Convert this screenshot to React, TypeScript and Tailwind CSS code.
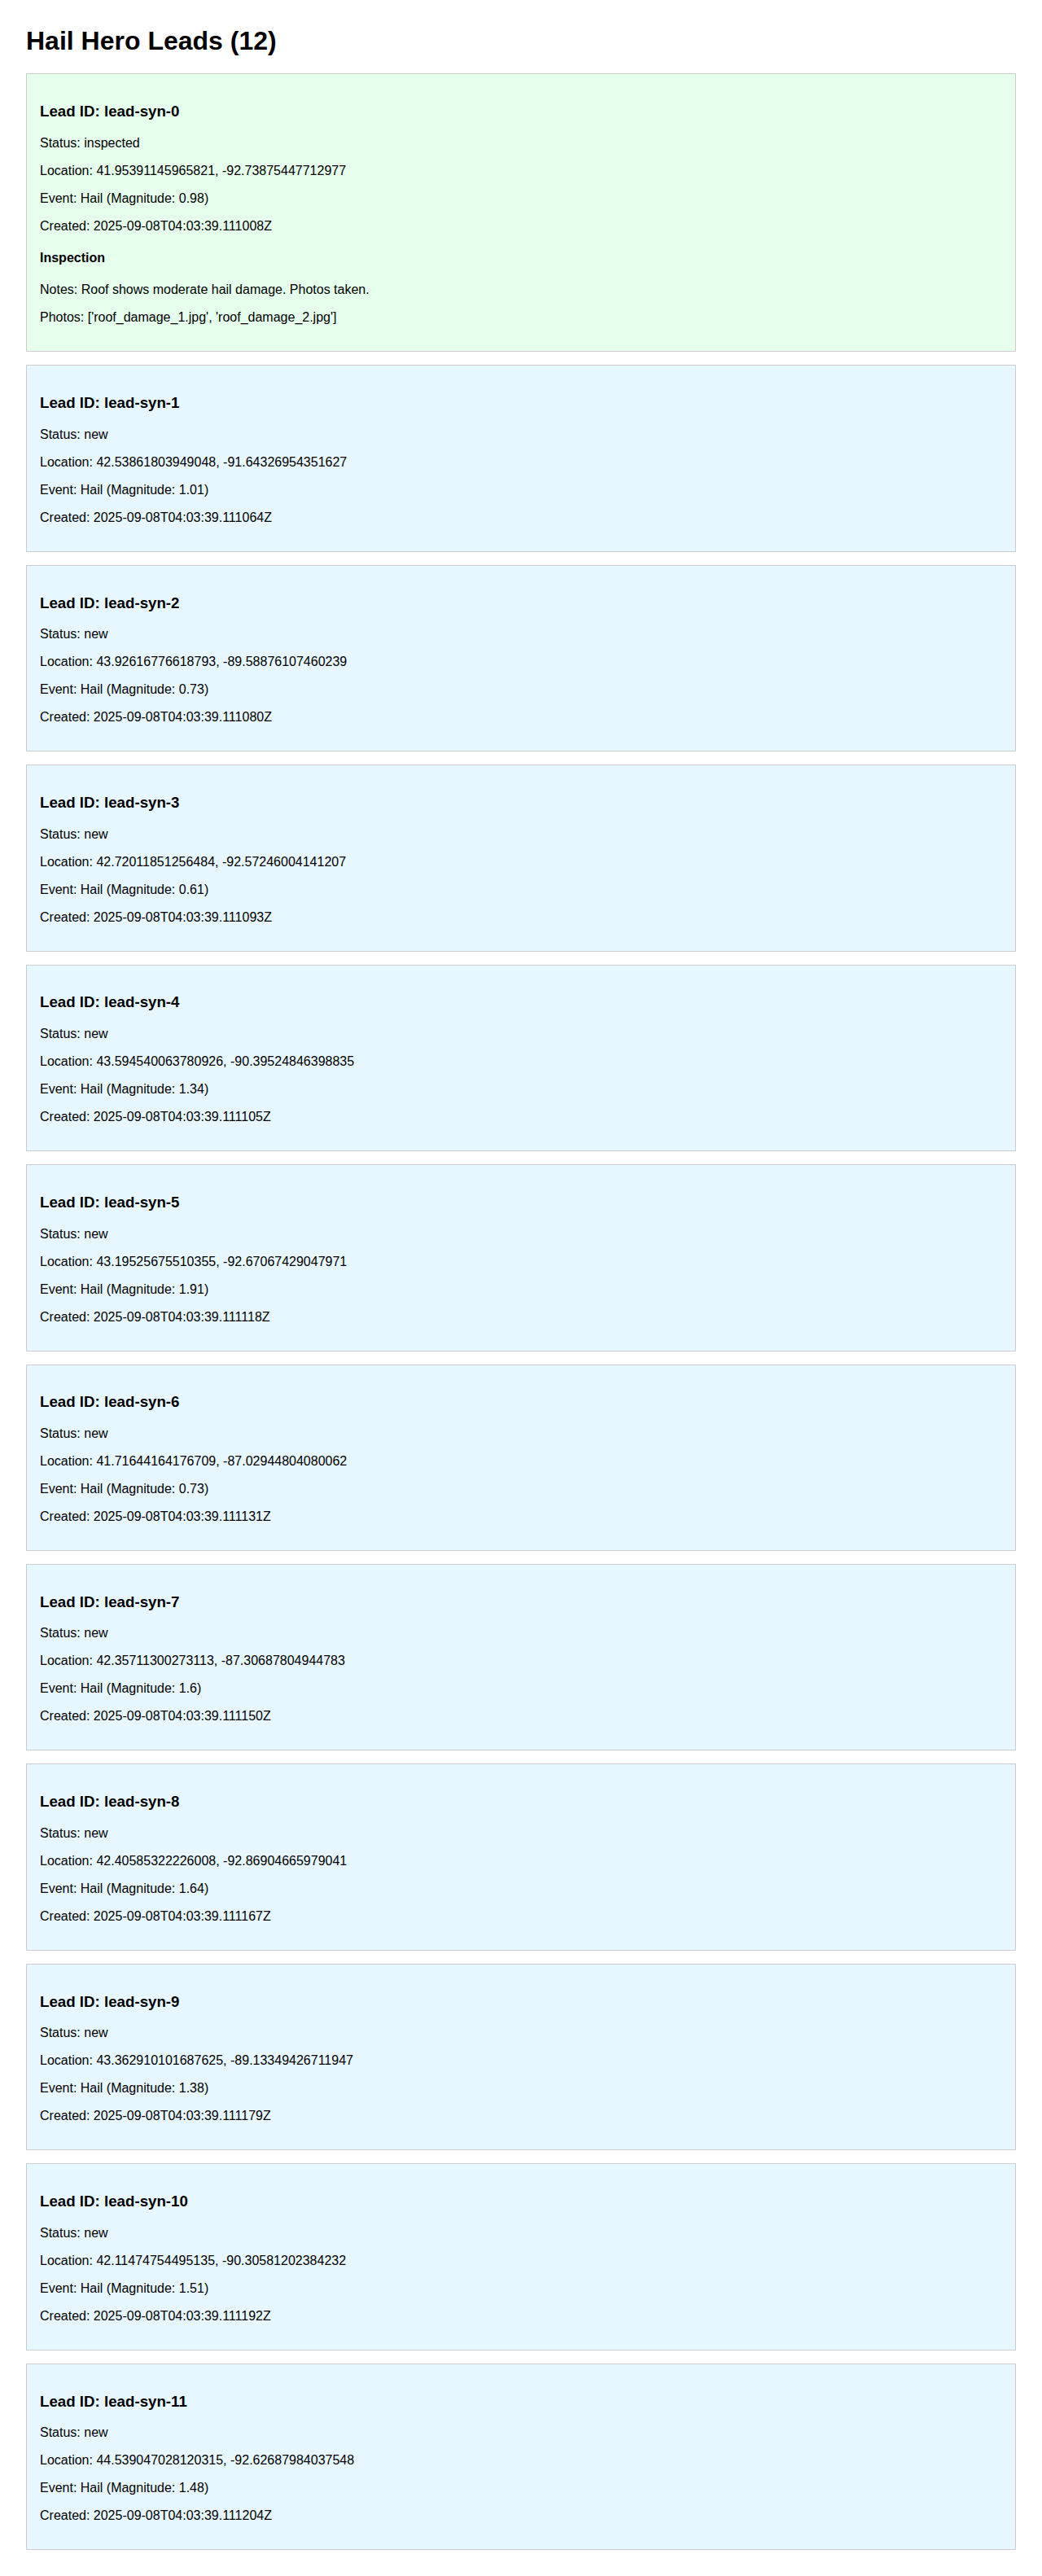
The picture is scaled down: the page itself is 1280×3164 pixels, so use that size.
import React from "react";

type Lead = {
  id: string;
  status: string;
  lat: string;
  lon: string;
  mag: string;
  created: string;
  inspection?: { notes: string; photos: string };
};

const leads: Lead[] = [
  {
    id: "lead-syn-0",
    status: "inspected",
    lat: "41.95391145965821",
    lon: "-92.73875447712977",
    mag: "0.98",
    created: "2025-09-08T04:03:39.111008Z",
    inspection: {
      notes: "Roof shows moderate hail damage. Photos taken.",
      photos: "['roof_damage_1.jpg', 'roof_damage_2.jpg']",
    },
  },
  { id: "lead-syn-1", status: "new", lat: "42.53861803949048", lon: "-91.64326954351627", mag: "1.01", created: "2025-09-08T04:03:39.111064Z" },
  { id: "lead-syn-2", status: "new", lat: "43.92616776618793", lon: "-89.58876107460239", mag: "0.73", created: "2025-09-08T04:03:39.111080Z" },
  { id: "lead-syn-3", status: "new", lat: "42.72011851256484", lon: "-92.57246004141207", mag: "0.61", created: "2025-09-08T04:03:39.111093Z" },
  { id: "lead-syn-4", status: "new", lat: "43.594540063780926", lon: "-90.39524846398835", mag: "1.34", created: "2025-09-08T04:03:39.111105Z" },
  { id: "lead-syn-5", status: "new", lat: "43.19525675510355", lon: "-92.67067429047971", mag: "1.91", created: "2025-09-08T04:03:39.111118Z" },
  { id: "lead-syn-6", status: "new", lat: "41.71644164176709", lon: "-87.02944804080062", mag: "0.73", created: "2025-09-08T04:03:39.111131Z" },
  { id: "lead-syn-7", status: "new", lat: "42.35711300273113", lon: "-87.30687804944783", mag: "1.6", created: "2025-09-08T04:03:39.111150Z" },
  { id: "lead-syn-8", status: "new", lat: "42.40585322226008", lon: "-92.86904665979041", mag: "1.64", created: "2025-09-08T04:03:39.111167Z" },
  { id: "lead-syn-9", status: "new", lat: "43.362910101687625", lon: "-89.13349426711947", mag: "1.38", created: "2025-09-08T04:03:39.111179Z" },
  { id: "lead-syn-10", status: "new", lat: "42.11474754495135", lon: "-90.30581202384232", mag: "1.51", created: "2025-09-08T04:03:39.111192Z" },
  { id: "lead-syn-11", status: "new", lat: "44.539047028120315", lon: "-92.62687984037548", mag: "1.48", created: "2025-09-08T04:03:39.111204Z" },
];

function LeadCard({ lead }: { lead: Lead }) {
  const bg = lead.status === "inspected" ? "bg-[#e6ffed]" : "bg-[#e6f7ff]";
  return (
    <div className={`border border-[#cccccc] p-4 ${bg}`}>
      <h3 className="text-[18.72px] font-bold my-[18.72px] leading-[normal]">Lead ID: {lead.id}</h3>
      <p className="my-4">Status: {lead.status}</p>
      <p className="my-4">
        Location: {lead.lat}, {lead.lon}
      </p>
      <p className="my-4">Event: Hail (Magnitude: {lead.mag})</p>
      <p className="my-4">Created: {lead.created}</p>
      {lead.inspection && (
        <div>
          <h4 className="text-base font-bold my-[21.28px] leading-[normal]">Inspection</h4>
          <p className="my-4">Notes: {lead.inspection.notes}</p>
          <p className="my-4">Photos: {lead.inspection.photos}</p>
        </div>
      )}
    </div>
  );
}

export default function App() {
  return (
    <div className="bg-white text-black p-8 text-base leading-[normal] font-['Liberation_Sans_Narrow','Liberation_Sans',Arial,sans-serif]">
      <h1 className="text-[32px] font-bold mt-0 mb-[21.44px] leading-[normal]">Hail Hero Leads ({leads.length})</h1>
      <div className="flex flex-col gap-4">
        {leads.map((l) => (
          <LeadCard key={l.id} lead={l} />
        ))}
      </div>
    </div>
  );
}
